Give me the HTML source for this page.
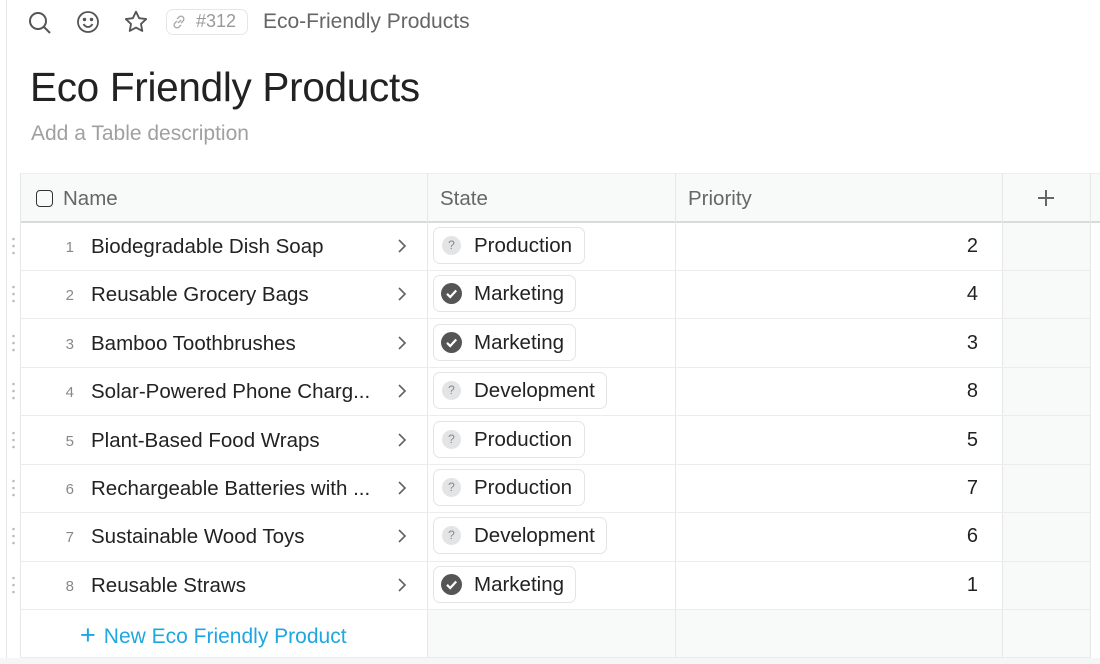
<!DOCTYPE html>
<html><head><meta charset="utf-8"><style>
*{margin:0;padding:0;box-sizing:border-box}
body{width:1100px;height:664px;overflow:hidden;background:#fff;font-family:"Liberation Sans",sans-serif;position:relative;color:#222}
.a{position:absolute}
.vl{position:absolute;width:1px;background:#e6e8e8}
.hl{position:absolute;height:1px;background:#ececec;left:20px;width:1070px}
.num{position:absolute;left:56px;width:18px;text-align:right;font-size:15px;color:#888}
.nm{position:absolute;left:91px;font-size:20.5px;color:#222;white-space:nowrap}
.chev{position:absolute;left:396px}
.badge{position:absolute;left:433px;height:37px;border:1px solid #e4e4e4;border-radius:7px;background:#fff;font-size:20.5px;padding-left:40px;line-height:35px;color:#222}
.q{position:absolute;left:8px;top:8px;width:19px;height:19px;border-radius:50%;background:#e3e4e6;color:#888;font-size:12px;line-height:19px;text-align:center}
.ck{position:absolute;left:7px;top:7px;width:21px;height:21px}
.pr{position:absolute;left:900px;width:78px;text-align:right;font-size:20px}
.dots{position:absolute;left:12px;width:3px}
</style></head><body>
<div class="a" style="left:6px;top:0;width:1px;height:664px;background:#e8e8e8"></div>
<svg class="a" style="left:27px;top:10px" width="26" height="26" viewBox="0 0 26 26" fill="none" stroke="#555" stroke-width="2"><circle cx="11" cy="11" r="8"/><path d="M17 17l6 6"/></svg>
<svg class="a" style="left:76px;top:10px" width="24" height="24" viewBox="0 0 24 24" fill="none" stroke="#555" stroke-width="1.8"><circle cx="12" cy="12" r="10"/><circle cx="8.5" cy="9.5" r="0.8" fill="#555"/><circle cx="15.5" cy="9.5" r="0.8" fill="#555"/><path d="M7.5 14c1.2 2 2.6 3 4.5 3s3.3-1 4.5-3"/></svg>
<svg class="a" style="left:123px;top:9px" width="26" height="26" viewBox="0 0 24 24" fill="none" stroke="#555" stroke-width="1.7" stroke-linejoin="round"><path d="M12 2.5l2.9 6 6.5.8-4.8 4.5 1.2 6.5L12 17.1l-5.8 3.2 1.2-6.5L2.6 9.3l6.5-.8z"/></svg>
<div class="a" style="left:166px;top:9px;width:82px;height:26px;border:1px solid #e6e6e6;border-radius:7px"></div>
<svg class="a" style="left:171px;top:14px" width="16" height="16" viewBox="0 0 16 16" fill="none" stroke="#aaa" stroke-width="1.4"><path d="M7 9l3-3M6 5l2-2a2.8 2.8 0 014 4l-2 2M10 11l-2 2a2.8 2.8 0 01-4-4l2-2"/></svg>
<div class="a" style="left:196px;top:11px;font-size:18px;color:#999">#312</div>
<div class="a" style="left:263px;top:10px;font-size:21px;color:#666">Eco-Friendly Products</div>
<div class="a" style="left:30px;top:64px;font-size:40.5px;font-weight:500;color:#222;letter-spacing:-0.3px">Eco Friendly Products</div>
<div class="a" style="left:31px;top:122px;font-size:21px;color:#a0a0a0">Add a Table description</div>
<div class="a" style="left:20px;top:173px;width:1080px;height:48px;background:#f8f9f9;border-top:1px solid #eee"></div>
<div class="a" style="left:20px;top:221px;width:1080px;height:2px;background:#d8dadb"></div>
<div class="a" style="left:1002px;top:223px;width:88px;height:435px;background:#f8f9f9"></div>
<div class="a" style="left:427px;top:610px;width:663px;height:48px;background:#f8f9f9"></div>
<div class="a" style="left:0;top:658px;width:1100px;height:6px;background:#f5f6f6"></div>
<div class="vl" style="left:20px;top:173px;height:485px"></div>
<div class="vl" style="left:427px;top:173px;height:485px"></div>
<div class="vl" style="left:675px;top:173px;height:485px"></div>
<div class="vl" style="left:1002px;top:173px;height:485px"></div>
<div class="vl" style="left:1090px;top:173px;height:485px"></div>
<div class="a" style="left:36px;top:190px;width:17px;height:17px;border:1.6px solid #333;border-radius:4px"></div>
<div class="a" style="left:63px;top:187px;font-size:20.5px;color:#666">Name</div>
<div class="a" style="left:440px;top:187px;font-size:20.5px;color:#666">State</div>
<div class="a" style="left:688px;top:187px;font-size:20.5px;color:#666">Priority</div>
<svg class="a" style="left:1036px;top:188px" width="20" height="20" viewBox="0 0 20 20" stroke="#666" stroke-width="2"><path d="M10 2v16M2 10h16"/></svg>

<div class="hl" style="top:270px"></div><div class="hl" style="top:318px"></div><div class="hl" style="top:367px"></div><div class="hl" style="top:415px"></div><div class="hl" style="top:464px"></div><div class="hl" style="top:512px"></div><div class="hl" style="top:561px"></div><div class="hl" style="top:609px"></div><div class="hl" style="top:657px"></div>

<div id="rows"></div>
<div class="a" style="left:80px;top:619px;font-size:21px;color:#1ea7e0"><span style="font-size:27px;font-weight:300;position:relative;top:1px;margin-right:8px">+</span>New Eco Friendly Product</div>
<script>
var d=[["Biodegradable Dish Soap","Production",2],["Reusable Grocery Bags","Marketing",4],["Bamboo Toothbrushes","Marketing",3],["Solar-Powered Phone Charg...","Development",8],["Plant-Based Food Wraps","Production",5],["Rechargeable Batteries with ...","Production",7],["Sustainable Wood Toys","Development",6],["Reusable Straws","Marketing",1]];
var h="";
d.forEach(function(r,i){var t=222+i*48.4;var c=t+24;
h+='<svg class="dots" style="top:'+(c-9)+'px" width="3" height="18"><circle cx="1.5" cy="2" r="1.3" fill="#bbb"/><circle cx="1.5" cy="9" r="1.3" fill="#bbb"/><circle cx="1.5" cy="16" r="1.3" fill="#bbb"/></svg>';
h+='<div class="num" style="top:'+(c-7)+'px">'+(i+1)+'</div>';
h+='<div class="nm" style="top:'+(c-11)+'px">'+r[0]+'</div>';
h+='<svg class="chev" style="top:'+(c-8)+'px" width="12" height="16" viewBox="0 0 12 16" fill="none" stroke="#666" stroke-width="1.7"><path d="M3 2l6 6-6 6"/></svg>';
var w=r[1]=="Production"?152:r[1]=="Marketing"?143:174;
var ic=r[1]=="Marketing"?'<svg class="ck" viewBox="0 0 21 21"><circle cx="10.5" cy="10.5" r="10.5" fill="#555"/><path d="M6 10.8l3.2 3.2 6-6.5" stroke="#fff" stroke-width="2.2" fill="none"/></svg>':'<span class="q">?</span>';
h+='<div class="badge" style="top:'+(c-19)+'px;width:'+w+'px">'+ic+r[1]+'</div>';
h+='<div class="pr" style="top:'+(c-11)+'px">'+r[2]+'</div>';
});
document.getElementById("rows").innerHTML=h;
</script>
</body></html>
